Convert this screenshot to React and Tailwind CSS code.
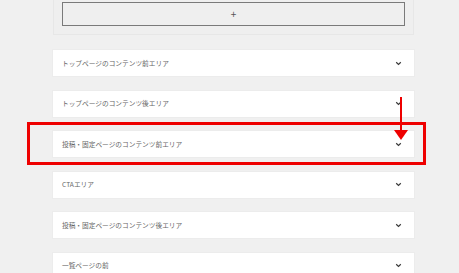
import React from "react";

const Chevron = () => (
  <svg width="7" height="5" viewBox="0 0 7 5" className="shrink-0">
    <polyline points="1.2,1.2 3.5,3.4 5.8,1.2" fill="none" stroke="#3a3a3a" strokeWidth="1.2" />
  </svg>
);

const items = [
  "トップページのコンテンツ前エリア",
  "トップページのコンテンツ後エリア",
  "投稿・固定ページのコンテンツ前エリア",
  "CTAエリア",
  "投稿・固定ページのコンテンツ後エリア",
  "一覧ページの前",
];

export default function App() {
  return (
    <div
      className="relative w-[459px] h-[273px] overflow-hidden bg-[#f0f0f0]"
      style={{ fontFamily: '"Noto Sans CJK JP", "Noto Sans", sans-serif' }}
    >
      <div className="ml-[53px] w-[361px] flex flex-col">
        <div className="h-[35px] border border-t-0 border-[#e7e7e7] bg-[#efefef] pt-[2px] px-[8px]">
          <div className="h-[24px] border-[1.5px] border-[#7a7a7a] bg-[#efefef] flex items-center justify-center text-[#555] text-[10px] leading-none">
            +
          </div>
        </div>
        <div className="mt-[15px] flex flex-col gap-[14.5px]">
          {items.map((t) => (
            <div
              key={t}
              className="h-[26px] bg-white flex items-center justify-between pl-[9px] pr-[12px] shadow-[0_0_0_1px_#ececec]"
            >
              <span className="text-[6.7px] text-[#666] leading-none">{t}</span>
              <Chevron />
            </div>
          ))}
        </div>
      </div>
      {/* annotation */}
      <div className="absolute left-[27px] top-[122px] w-[399px] h-[43px] border-[3px] border-[#ee0000]" />
      <div className="absolute left-[400px] top-[97px] w-[2px] h-[35px] bg-[#ee0000]" />
      <svg className="absolute left-[394px] top-[130px]" width="14" height="10" viewBox="0 0 14 10">
        <polygon points="0,0 14,0 7,10" fill="#ee0000" />
      </svg>
    </div>
  );
}
